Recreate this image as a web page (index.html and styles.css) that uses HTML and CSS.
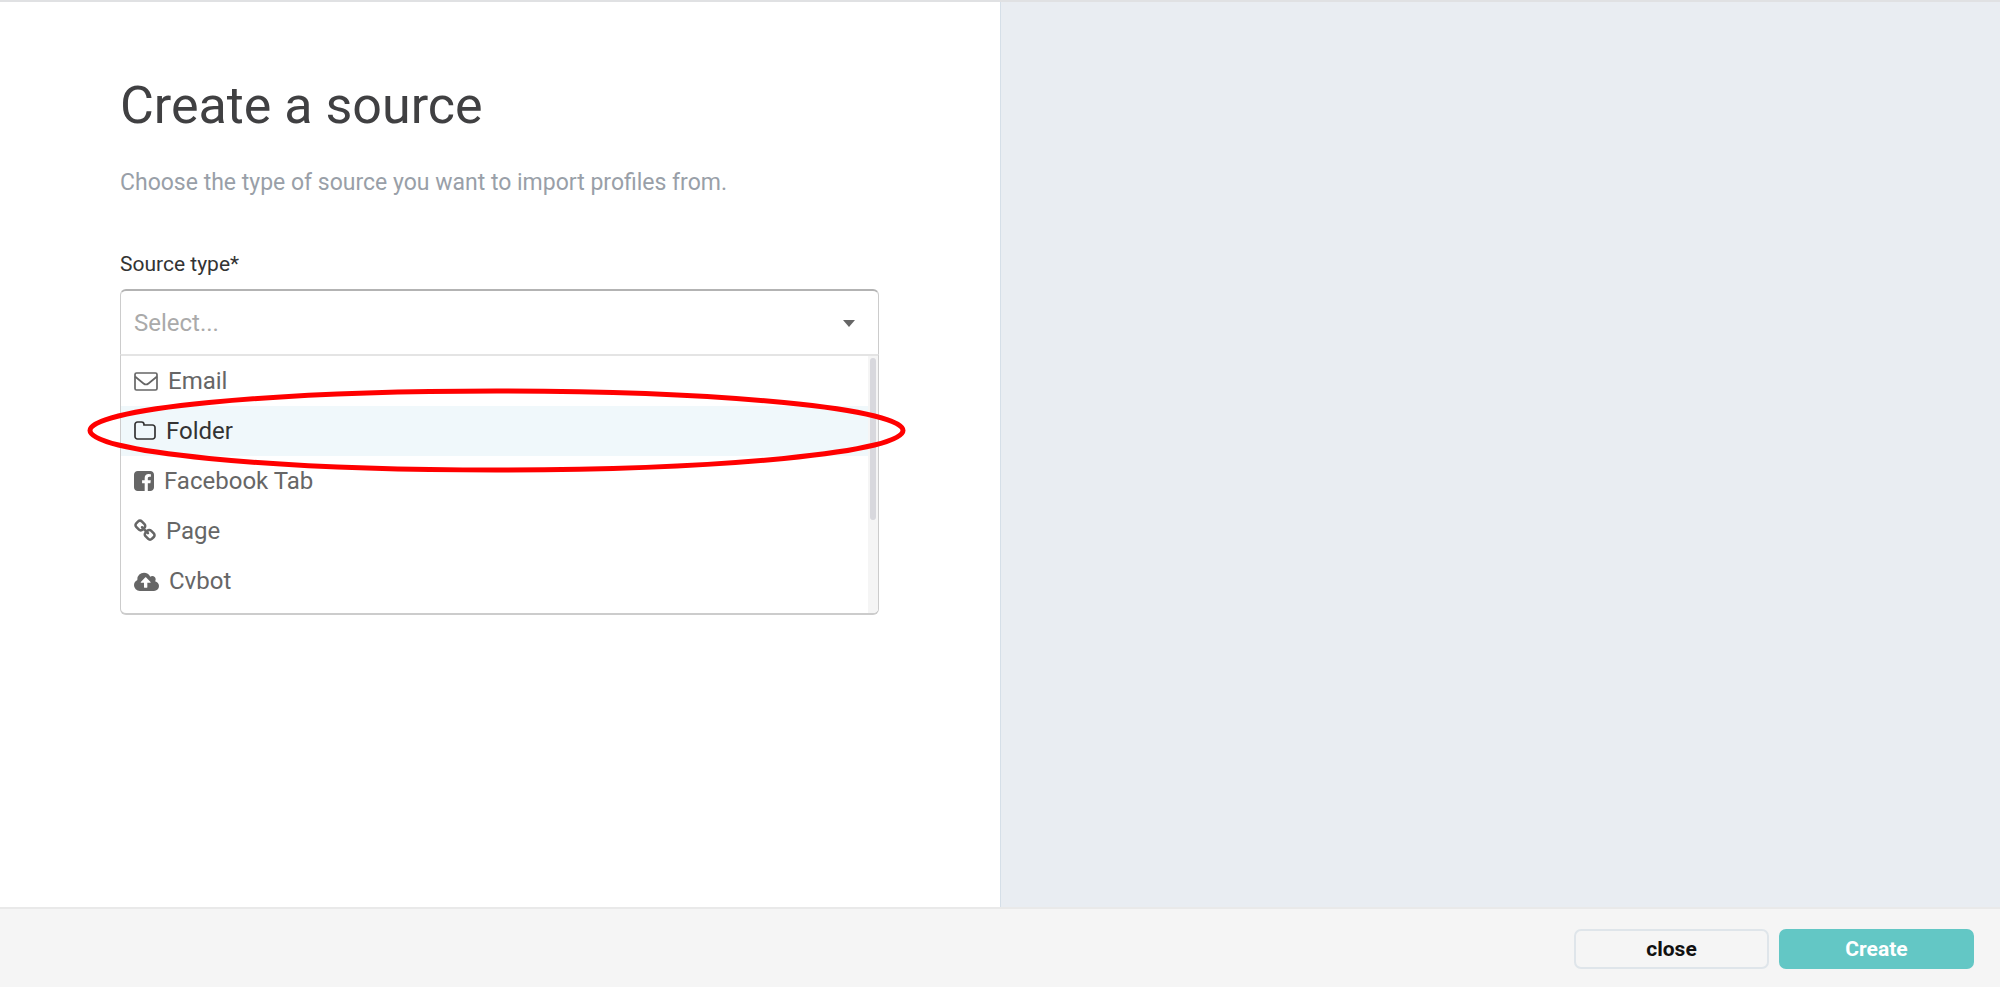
FILE: index.html
```html
<!DOCTYPE html>
<html lang="en">
<head>
    <meta charset="UTF-8">
    <meta name="viewport" content="width=device-width, initial-scale=1.0">
    <title>Create a source</title>
    <link rel="stylesheet" href="styles.css">
</head>
<body>
    <main class="content">
        <section class="form-panel">
            <h1>Create a source</h1>
            <p class="intro">Choose the type of source you want to import profiles from.</p>

            <form id="source-form">
                <label for="source-type">Source type*</label>
                <div class="dropdown">
                    <div class="select-box">
                        <select id="source-type">
                            <option>Select...</option>
                        </select>
                        <span class="arrow"></span>
                    </div>
                    <div class="menu">
                        <ul class="options" role="listbox" aria-label="Source type">
                            <li role="option">
                                <svg width="24" height="24" viewBox="0 0 24 24" fill="none" stroke="currentColor" stroke-width="1.7" stroke-linejoin="round"><rect x="1" y="4" width="22" height="17" rx="1.5"/><path d="M1 7.500L9.500 14.500q2.500 2 5 0L23 7.500"/></svg>
                                Email
                            </li>
                            <li role="option" class="active">
                                <svg width="22" height="24" viewBox="0 0 22 24" fill="none" stroke="currentColor" stroke-width="1.7"><path d="M1 5.500A2.500 2.500 0 0 1 3.500 3H7.500A2.500 2.500 0 0 1 10 5.500V6h8.500A2.500 2.500 0 0 1 21 8.500v9A2.500 2.500 0 0 1 18.500 20h-15A2.500 2.500 0 0 1 1 17.500z"/></svg>
                                Folder
                            </li>
                            <li role="option">
                                <svg width="20" height="24" viewBox="0 0 1536 1792" fill="currentColor"><path d="M1248 128q119 0 203.500 84.500t84.500 203.500v960q0 119-84.500 203.500t-203.500 84.500h-188v-595h199l30-232h-229v-148q0-56 23.500-84t91.500-28l122-1v-207q-63-9-178-9-136 0-217.500 80t-81.500 226v171h-200v232h200v595h-532q-119 0-203.500-84.500t-84.500-203.500v-960q0-119 84.500-203.500t203.500-84.500h960z"/></svg>
                                Facebook Tab
                            </li>
                            <li role="option">
                                <svg width="22" height="24" viewBox="64 0 1664 1792" fill="currentColor"><path d="M1520 1216q0-40-28-68l-208-208q-28-28-68-28-42 0-72 32 3 3 19 18.500t21.500 21.500 15 19 13 25.500 3.500 27.500q0 40-28 68t-68 28q-15 0-27.500-3.500t-25.500-13-19-15-21.500-21.500-18.500-19q-33 31-33 73 0 40 28 68l206 207q27 27 68 27 40 0 68-26l147-146q28-28 28-67zm-703-705q0-40-28-68l-206-207q-28-28-68-28-39 0-68 27l-147 146q-28 28-28 67 0 40 28 68l208 208q27 27 68 27 42 0 72-31-3-3-19-18.500t-21.500-21.500-15-19-13-25.500-3.500-27.500q0-40 28-68t68-28q15 0 27.500 3.500t25.500 13 19 15 21.500 21.500 18.500 19q33-31 33-73zm895 705q0 120-85 203l-147 146q-83 83-203 83-121 0-204-85l-206-207q-83-83-83-203 0-123 88-209l-88-88q-86 88-208 88-120 0-204-84l-208-208q-84-84-84-204t85-203l147-146q83-83 203-83 121 0 204 85l206 207q83 83 83 203 0 123-88 209l88 88q86-88 208-88 120 0 204 84l208 208q84 84 84 204z"/></svg>
                                Page
                            </li>
                            <li role="option">
                                <svg width="25" height="24" viewBox="0 0 1920 1792" fill="currentColor"><path d="M1280 992q0-14-9-23l-352-352q-9-9-23-9t-23 9l-351 351q-10 12-10 24 0 14 9 23t23 9h224v352q0 13 9.500 22.500t22.500 9.500h192q13 0 22.500-9.500t9.500-22.500v-352h224q13 0 22.500-9.500t9.500-22.500zm640 288q0 159-112.500 271.500t-271.500 112.500h-1088q-185 0-316.500-131.500t-131.500-316.500q0-130 70-240t188-165q-2-30-2-43 0-212 150-362t362-150q156 0 285.500 87t188.500 231q71-62 166-62 106 0 181 75t75 181q0 76-41 138 130 31 213.500 135.500t83.500 238.500z"/></svg>
                                Cvbot
                            </li>
                        </ul>
                        <div class="scrollbar"><div class="thumb"></div></div>
                    </div>
                    <!-- highlight around the Folder option -->
                    <svg class="marker"><ellipse cx="50%" cy="50%" rx="50%" ry="50%"/></svg>
                </div>
            </form>
        </section>
        <aside class="side-panel"></aside>
    </main>

    <footer class="footer">
        <button type="button" class="btn">close</button>
        <button type="submit" form="source-form" class="btn btn-create">Create</button>
    </footer>
</body>
</html>
```
FILE: styles.css
```css
* {
    box-sizing: border-box;
}
body {
    font-family: Roboto, Arial, sans-serif;
    margin: 0;
    min-height: 100vh;
    display: flex;
    flex-direction: column;
    border-top: 2px solid #e0e1e3;
    color: #404042;
}
.content {
    flex: 1;
    display: flex;
}
.form-panel {
    width: 50%;
    padding: 72px 121px 72px 120px;
    background: #fff;
}
.side-panel {
    width: 50%;
    background: #e9edf2;
    border-left: 1px solid #d5dfe8;
}

h1 {
    margin: 0;
    font-size: 52px;
    font-weight: 400;
    line-height: 64px;
}
.intro {
    margin: 29px 0 0;
    font-size: 23px;
    line-height: 32px;
    color: #999fa8;
}
label {
    display: block;
    margin: 53px 0 13px;
    font-size: 21px;
    line-height: 24px;
    color: #333;
}

.dropdown {
    position: relative;
}
.select-box {
    position: relative;
    height: 65px;
    border: 1px solid #ccc;
    border-top: 2px solid #b3b3b3;
    border-bottom: none;
    border-radius: 6px 6px 0 0;
}
select {
    appearance: none;
    width: 100%;
    height: 100%;
    padding: 0 13px;
    border: none;
    outline: none;
    background: none;
    font-family: inherit;
    font-size: 24px;
    color: #aaa;
}
.arrow {
    position: absolute;
    right: 23px;
    top: 29px;
    border: 6px solid transparent;
    border-top: 7px solid #666;
    border-bottom: none;
    pointer-events: none;
}
.menu {
    display: flex;
    height: 261px;
    border: 1px solid #ccc;
    border-top: 2px solid #e4e4e4;
    border-bottom: 2px solid #ccc;
    border-radius: 0 0 6px 6px;
    overflow: hidden;
}
.options {
    flex: 1;
    margin: 0;
    padding: 0;
    list-style: none;
}
.options li {
    display: flex;
    align-items: center;
    gap: 10px;
    height: 50px;
    padding: 0 13px;
    font-size: 24px;
    color: #666;
}
.options .active {
    background: #f0f8fb;
    color: #333;
}
.scrollbar {
    width: 10px;
    padding: 2px;
    background: #f5f5f5;
}
.thumb {
    height: 162px;
    border-radius: 3px;
    background: #d8d8dd;
}
.marker {
    position: absolute;
    top: 102px;
    left: -30px;
    width: calc(100% + 54px);
    height: 79px;
    overflow: visible;
    fill: none;
    stroke: #f00;
    stroke-width: 5px;
    pointer-events: none;
}

.footer {
    display: flex;
    justify-content: flex-end;
    gap: 10px;
    height: 80px;
    padding: 20px 26px;
    border-top: 2px solid #e9e9e9;
    background: #f5f5f5;
}
.btn {
    width: 195px;
    height: 40px;
    border: 2px solid #dfe5ea;
    border-radius: 7px;
    background: none;
    font-family: inherit;
    font-size: 21px;
    font-weight: 700;
    color: #111;
}
.btn-create {
    border-color: #63c7c5;
    background: #63c7c5;
    color: #fff;
}
```
